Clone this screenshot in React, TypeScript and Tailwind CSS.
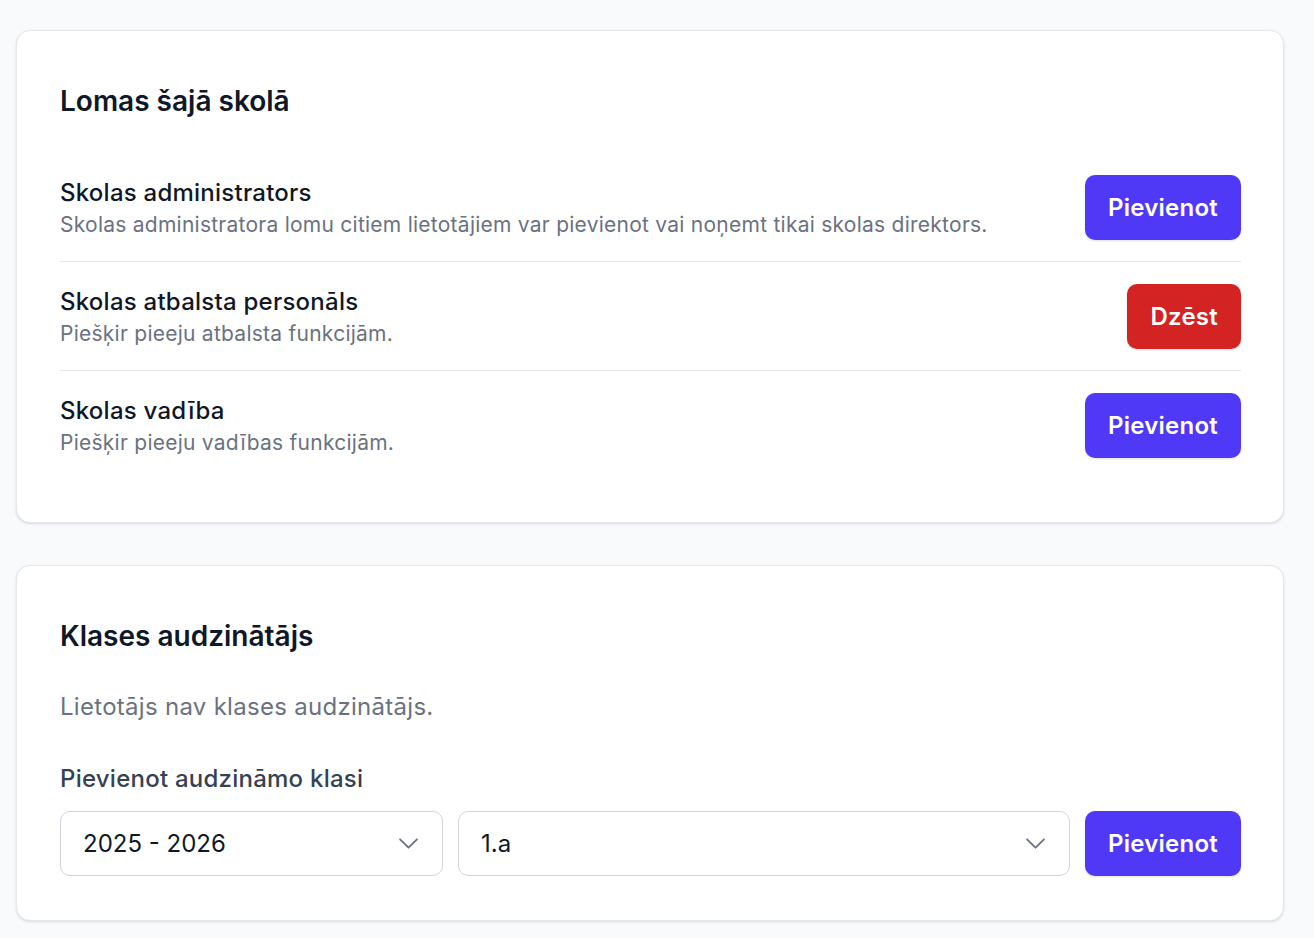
type Role = {
  name: string;
  hint: string;
  action: "add" | "remove";
};

const roles: Role[] = [
  {
    name: "Skolas administrators",
    hint: "Skolas administratora lomu citiem lietotājiem var pievienot vai noņemt tikai skolas direktors.",
    action: "add",
  },
  {
    name: "Skolas atbalsta personāls",
    hint: "Piešķir pieeju atbalsta funkcijām.",
    action: "remove",
  },
  {
    name: "Skolas vadība",
    hint: "Piešķir pieeju vadības funkcijām.",
    action: "add",
  },
];

function Chevron() {
  return (
    <svg viewBox="0 0 24 24" className="h-[27px] w-[27px] text-gray-500" fill="none" stroke="currentColor" strokeWidth={1.6}>
      <path strokeLinecap="round" strokeLinejoin="round" d="m19.5 8.25-7.5 7.5-7.5-7.5" />
    </svg>
  );
}

function Select({ value, className }: { value: string; className?: string }) {
  return (
    <button
      className={`flex h-[65px] items-center justify-between rounded-[10px] border border-gray-300 bg-white pl-[22px] pr-[20px] text-[24px] text-gray-900 ${className ?? ""}`}
    >
      <span>{value}</span>
      <Chevron />
    </button>
  );
}

const btn = "h-[65px] rounded-[10px] px-[23px] text-[24px] tracking-[0.01em] font-semibold text-white shadow-sm";

export default function App() {
  return (
    <div
      className="min-h-screen bg-gray-50 pl-4 pr-[30px] pt-[30px] pb-4"
      style={{ fontFamily: "Inter, 'Noto Sans', sans-serif" }}
    >
      <div className="flex flex-col gap-[42px]">
        <section className="rounded-[14px] border border-gray-200 bg-white pl-[43px] pr-[42px] pt-[50px] pb-[43px] shadow-sm">
          <h2 className="text-[28px] leading-[40px] font-semibold text-gray-900">Lomas šajā skolā</h2>
          <div className="mt-[32px] flex flex-col">
            {roles.map((r, i) => (
              <div
                key={r.name}
                className={`flex items-center justify-between gap-6 pt-[22px] pb-[21px] ${i < roles.length - 1 ? "border-b border-gray-200" : ""}`}
              >
                <div className="flex flex-col">
                  <div className="text-[24px] leading-[34px] tracking-[0.01em] font-medium text-gray-900">{r.name}</div>
                  <div className="text-[21px] leading-[30px] tracking-[0.012em] text-gray-500">{r.hint}</div>
                </div>
                {r.action === "add" ? (
                  <button className={`${btn} bg-[#4f39f6]`}>Pievienot</button>
                ) : (
                  <button className={`${btn} bg-[#d42323]`}>Dzēst</button>
                )}
              </div>
            ))}
          </div>
        </section>

        <section className="rounded-[14px] border border-gray-200 bg-white pl-[43px] pr-[42px] pt-[50px] pb-[44px] shadow-sm">
          <h2 className="text-[28px] leading-[40px] font-semibold text-gray-900">Klases audzinātājs</h2>
          <p className="mt-[35px] text-[24px] leading-[32px] tracking-[0.012em] text-gray-500">Lietotājs nav klases audzinātājs.</p>
          <div className="mt-[40px] text-[24px] leading-[32px] tracking-[0.01em] font-medium text-gray-700">Pievienot audzināmo klasi</div>
          <div className="mt-[16px] flex items-center gap-[15px]">
            <Select value="2025 - 2026" className="w-[383px]" />
            <Select value="1.a" className="flex-1" />
            <button className={`${btn} bg-[#4f39f6]`}>Pievienot</button>
          </div>
        </section>
      </div>
    </div>
  );
}
